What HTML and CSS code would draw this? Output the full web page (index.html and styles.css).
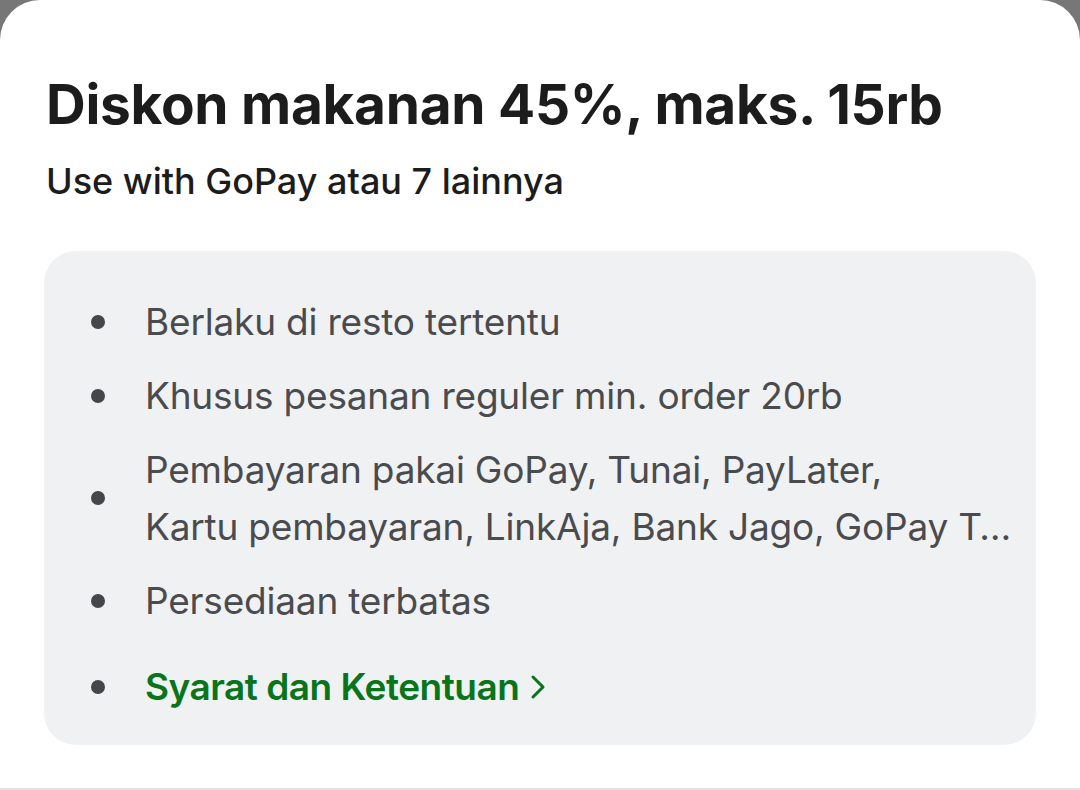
FILE: index.html
```html
<!DOCTYPE html>
<html lang="id">
<head>
    <meta charset="UTF-8">
    <meta name="viewport" content="width=device-width, initial-scale=1.0">
    <title>Diskon makanan</title>
    <link rel="stylesheet" href="styles.css">
</head>
<body>
    <div class="sheet">
        <h1 class="promo-title">Diskon makanan 45%, maks. 15rb</h1>
        <p class="promo-sub">Use with GoPay atau 7 lainnya</p>

        <!-- Terms box -->
        <div class="terms-box">
            <ul class="terms-list">
                <li class="term"><span class="dot"></span><span class="term-text">Berlaku di resto tertentu</span></li>
                <li class="term"><span class="dot"></span><span class="term-text">Khusus pesanan reguler min. order 20rb</span></li>
                <li class="term"><span class="dot"></span>
                    <span class="term-text term-multi">
                        <span class="line">Pembayaran pakai GoPay, Tunai, PayLater,</span>
                        <span class="line line-cut">Kartu pembayaran, LinkAja, Bank Jago, GoPay Tabungan, GoPay Coins</span>
                    </span>
                </li>
                <li class="term"><span class="dot"></span><span class="term-text">Persediaan terbatas</span></li>
                <li class="term term-link"><span class="dot"></span>
                    <a class="terms-link" href="#">Syarat dan Ketentuan
                        <svg class="chev" viewBox="0 0 18 30" width="18" height="30"><path d="M4 5l10 10-10 10" fill="none" stroke="currentColor" stroke-width="3" stroke-linecap="round" stroke-linejoin="round"/></svg>
                    </a>
                </li>
            </ul>
        </div>
    </div>
</body>
</html>
```

FILE: styles.css
```css
:root {
    --ink: #1c1c1c;
    --muted: #4a4b4e;
    --box-bg: #f0f1f3;
    --green: #08751a;
    --backdrop: #777777;
}

body {
    margin: 0;
    background-color: var(--backdrop);
    font-family: 'Inter', 'Roboto', sans-serif;
}

.sheet {
    background-color: #ffffff;
    border-radius: 40px 40px 0 0;
    height: 790px;
    border-bottom: 2px solid #e2e2e2;
    padding: 72px 44px 0 44px;
    box-sizing: border-box;
}

.promo-title {
    margin: 0 0 0 2px;
    font-size: 55px;
    font-weight: 700;
    line-height: 64px;
    color: var(--ink);
    letter-spacing: -0.3px;
}

.promo-sub {
    margin: 24px 0 0 2px;
    font-size: 36px;
    font-weight: 500;
    line-height: 42px;
    color: var(--ink);
}

/* Terms box */
.terms-box {
    margin-top: 49px;
    background-color: var(--box-bg);
    border-radius: 32px;
    padding: 42px 16px 30px 47px;
}

.terms-list {
    list-style: none;
    margin: 0;
    padding: 0;
    display: flex;
    flex-direction: column;
    gap: 17px;
}

.term {
    display: flex;
    align-items: center;
    gap: 40px;
}

.dot {
    flex: none;
    width: 14px;
    height: 14px;
    border-radius: 50%;
    background-color: #45464a;
}

.term-text {
    font-size: 37px;
    line-height: 57px;
    color: var(--muted);
    letter-spacing: -0.2px;
}

.term-multi {
    display: flex;
    flex-direction: column;
    min-width: 0;
    flex: 1;
}

.line {
    display: block;
}

.line-cut {
    white-space: nowrap;
    overflow: hidden;
    text-overflow: ellipsis;
}

.term-link {
    margin-top: 12px;
}

.terms-link {
    display: flex;
    align-items: center;
    gap: 10px;
    font-size: 37px;
    line-height: 57px;
    font-weight: 600;
    color: var(--green);
    text-decoration: none;
    letter-spacing: -0.5px;
}

.chev {
    display: block;
}
```
